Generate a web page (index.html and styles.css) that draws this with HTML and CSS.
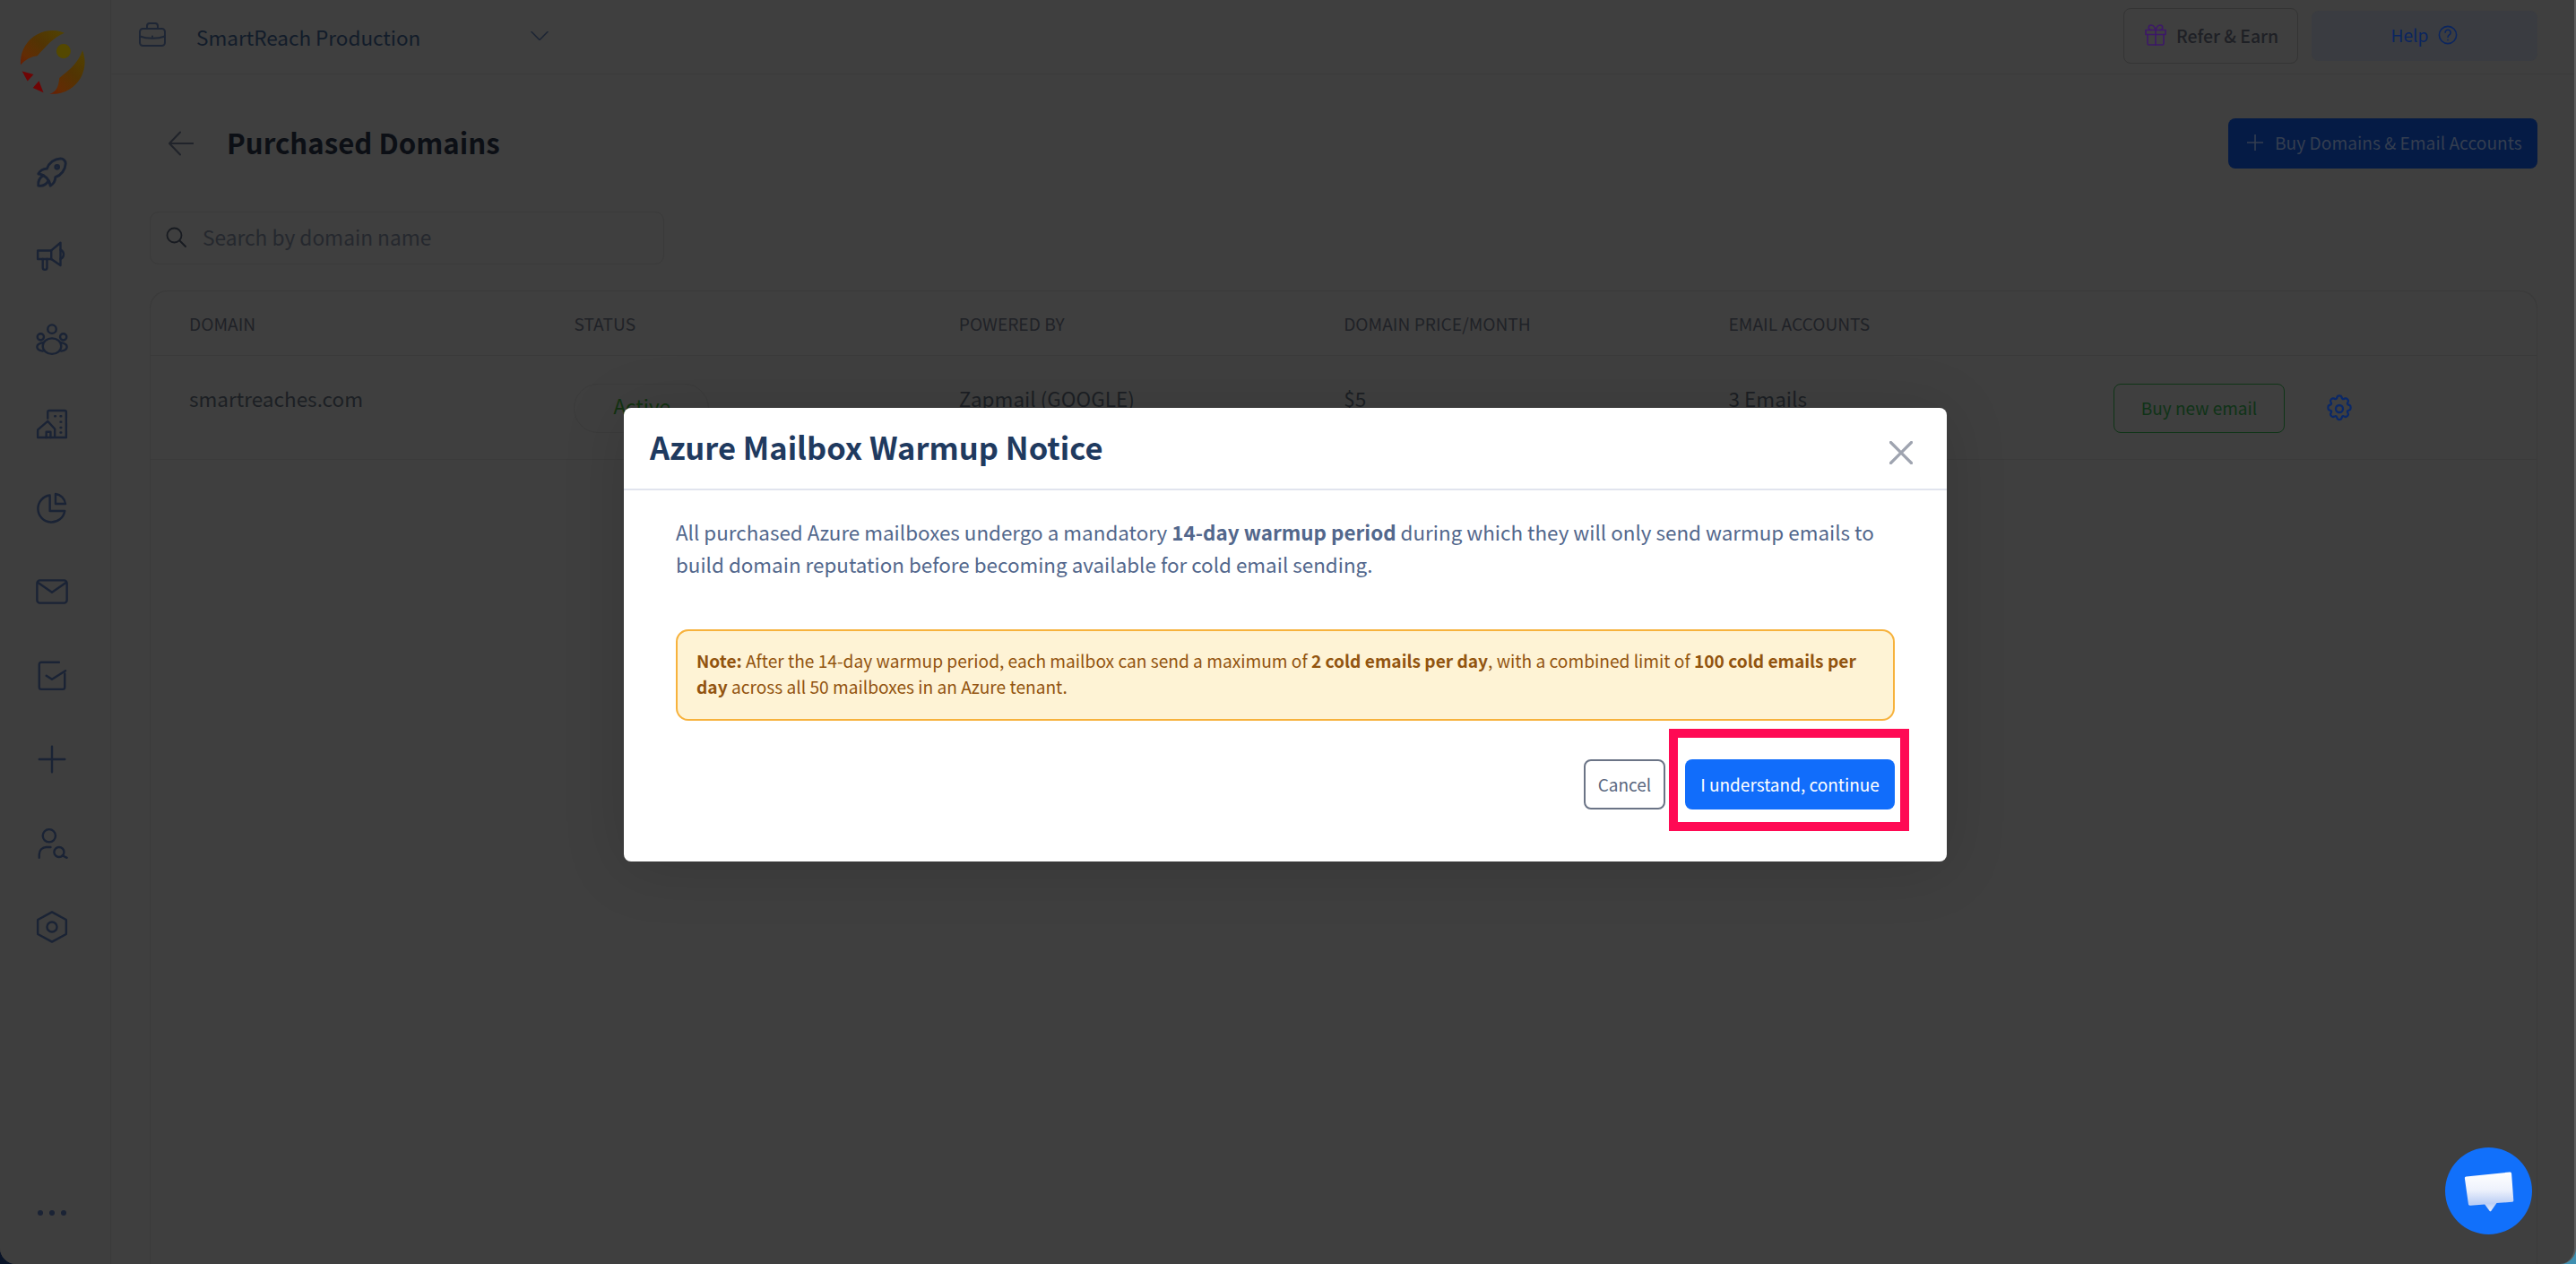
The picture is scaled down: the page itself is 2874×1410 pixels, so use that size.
FILE: index.html
```html
<!DOCTYPE html>
<html>
<head>
    <meta charset="UTF-8">
    <title>Purchased Domains</title>
    <link rel="stylesheet" href="styles.css">
</head>
<body>
    <div class="app">
        <!-- sidebar -->
        <aside class="sidebar">
            <svg class="logo" viewBox="60 95 230 230">
                <defs>
                    <linearGradient id="logoFill" gradientUnits="userSpaceOnUse" x1="90" y1="300" x2="270" y2="110">
                        <stop offset="0" stop-color="#6f0a02"/>
                        <stop offset="0.3" stop-color="#622c04"/>
                        <stop offset="0.55" stop-color="#523403"/>
                        <stop offset="1" stop-color="#514a00"/>
                    </linearGradient>
                </defs>
                <path fill="url(#logoFill)" d="M69 218A106 106 0 0 1 215 112C180 125 150 160 125 188C105 190 85 200 69 218Z"/>
                <path fill="url(#logoFill)" d="M275 170A106 106 0 0 1 165 315C190 308 195 290 198 262C235 235 265 205 275 170Z"/>
                <circle cx="212" cy="173" r="24" fill="#544800"/>
                <path fill="#6f0505" d="M74 240L112 250L92 273Z"/>
                <path fill="#6f0505" d="M130 272L145 311L110 295Z"/>
            </svg>
            <nav class="side-nav">
                <a class="side-item" href="#launch">
                    <svg class="icon icon-side" viewBox="2 2 20 20"><path d="M4 13a8 8 0 0 1 7 7a6 6 0 0 0 3-5a9 9 0 0 0 6-8a3 3 0 0 0-3-3a9 9 0 0 0-8 6a6 6 0 0 0-5 3"/><path d="M7 14a6 6 0 0 0-3 6a6 6 0 0 0 6-3"/><circle cx="15" cy="9" r="1"/></svg>
                </a>
                <a class="side-item" href="#campaigns">
                    <svg class="icon icon-side" viewBox="0 0 24 24"><path d="M2 8.500h9.500L18 3v16l-6.500-4.500H2z"/><path d="M18 8a3.500 3.500 0 0 1 0 6.500"/><path d="M5.500 14.500v6a1.500 1.500 0 0 0 3 0v-6"/><path d="M11.500 8.500v6"/></svg>
                </a>
                <a class="side-item" href="#prospects">
                    <svg class="icon icon-side" viewBox="0 0 24 24"><circle cx="12" cy="4.500" r="3"/><circle cx="4" cy="10" r="2.300"/><circle cx="20" cy="10" r="2.300"/><ellipse cx="12" cy="16.500" rx="6.500" ry="5.500"/><path d="M5.500 14c-2.500.5-4 1.500-4 3s1.500 2.500 4 3M18.500 14c2.500.5 4 1.500 4 3s-1.500 2.500-4 3"/></svg>
                </a>
                <a class="side-item" href="#accounts">
                    <svg class="icon icon-side" viewBox="0 0 24 24"><path d="M9 8V3.500a1 1 0 0 1 1-1h11a1 1 0 0 1 1 1v18H2v-5.500L9 10l5 5.500v6"/><path d="M8 21.500v-4h3v4"/><path d="M14 6.500h.5M18 6.500h.5M18 10.500h.5M18 14.500h.5M18 18h.5"/></svg>
                </a>
                <a class="side-item" href="#reports">
                    <svg class="icon icon-side" viewBox="0 0 24 24"><path d="M10.500 3.500a9.500 9.500 0 1 0 10.500 11h-10.500z"/><path d="M14.500 2.500a8 8 0 0 1 7 7h-7z"/></svg>
                </a>
                <a class="side-item" href="#inbox">
                    <svg class="icon icon-side" viewBox="0 0 24 24"><rect x="1.500" y="4" width="21" height="16" rx="2"/><path d="M2 5.500l10 7l10-7"/></svg>
                </a>
                <a class="side-item" href="#tasks">
                    <svg class="icon icon-side" viewBox="0 0 24 24"><path d="M17 3H4.500A1.500 1.500 0 0 0 3 4.500v16A1.500 1.500 0 0 0 4.500 22h15a1.500 1.500 0 0 0 1.500-1.500V11"/><path d="M8 12.500l4 2.500l9.500-6"/></svg>
                </a>
                <a class="side-item" href="#add">
                    <svg class="icon icon-side" viewBox="0 0 24 24"><path d="M12 3v18M3 12h18"/></svg>
                </a>
                <a class="side-item" href="#lookup">
                    <svg class="icon icon-side" viewBox="0 0 24 24"><circle cx="10" cy="6.500" r="4.500"/><path d="M3 22v-2.500a5 5 0 0 1 5-5h3"/><circle cx="17" cy="18" r="3.500"/><path d="M19.500 20.500l3 1.500"/></svg>
                </a>
                <a class="side-item" href="#settings">
                    <svg class="icon icon-side" viewBox="0 0 24 24"><path d="M12 1.500l10 5.500v10l-10 5.500L2 17V7z"/><circle cx="12" cy="12" r="3.500"/></svg>
                </a>
            </nav>
            <div class="side-more"><span></span><span></span><span></span></div>
        </aside>

        <div class="main">
            <!-- top bar -->
            <header class="topbar">
                <svg class="icon icon-case" viewBox="0 0 30 27"><rect x="1" y="7" width="28" height="19" rx="3.500"/><path d="M9 7V4a3 3 0 0 1 3-3h6a3 3 0 0 1 3 3v3"/><path d="M1 15.500c8 3 20 3 28 0"/><path d="M15 15.500v.5"/></svg>
                <span class="team-name">SmartReach Production</span>
                <svg class="icon icon-chevron" viewBox="0 0 20 10"><path d="M1 .5l9 9l9-9"/></svg>
                <div class="topbar-right">
                    <a class="btn-refer" href="#refer">
                        <svg class="icon icon-gift" viewBox="0 0 24 24"><rect x="1" y="6.500" width="22" height="5"/><path d="M3 11.500v10a1.500 1.500 0 0 0 1.500 1.500h15a1.500 1.500 0 0 0 1.500-1.500v-10"/><path d="M12 6.500V23"/><path d="M12 6.500c-1-3-3-5.500-5-5.500a2.700 2.700 0 0 0 0 5.500M12 6.500c1-3 3-5.500 5-5.500a2.700 2.700 0 0 1 0 5.500"/></svg>
                        <span>Refer &amp; Earn</span>
                    </a>
                    <a class="btn-help" href="#help">
                        <span>Help</span>
                        <svg class="icon icon-help" viewBox="0 0 24 24"><circle cx="12" cy="12" r="10.500"/><path d="M8.800 9a3.300 3.300 0 1 1 5 2.900c-1.200.8-1.800 1.400-1.800 2.800"/><path d="M12 18v.3"/></svg>
                    </a>
                </div>
            </header>

            <main class="content">
                <div class="page-head">
                    <svg class="icon icon-back" viewBox="0 0 28 28"><path d="M28 14H1M13 1.500L1 14l12 12.500"/></svg>
                    <h1 class="page-title">Purchased Domains</h1>
                    <a class="btn-buy" href="#buy">
                        <svg class="icon icon-plus" viewBox="0 0 18 18"><path d="M9 0v18M0 9h18"/></svg>
                        <span>Buy Domains &amp; Email Accounts</span>
                    </a>
                </div>

                <div class="search-box">
                    <svg class="icon icon-search" viewBox="0 0 23 23"><circle cx="9.500" cy="9.500" r="8"/><path d="M15.500 15.500l6.500 6.500"/></svg>
                    <span class="search-text">Search by domain name</span>
                </div>

                <div class="domain-table">
                    <div class="table-row table-head">
                        <div>DOMAIN</div>
                        <div>STATUS</div>
                        <div>POWERED BY</div>
                        <div>DOMAIN PRICE/MONTH</div>
                        <div>EMAIL ACCOUNTS</div>
                    </div>
                    <div class="table-row table-body">
                        <div>smartreaches.com</div>
                        <div><span class="status-pill">Active</span></div>
                        <div>Zapmail (GOOGLE)</div>
                        <div>$5</div>
                        <div>3 Emails</div>
                        <div class="row-actions">
                            <a class="btn-email" href="#email">Buy new email</a>
                            <svg class="icon icon-gear" viewBox="0 0 24 24"><path d="M10.300 1.800c.4-1.100 3-1.100 3.400 0l.5 1.400c.2.500.8.800 1.300.6l1.400-.5c1.100-.4 2.900 1.400 2.500 2.500l-.6 1.400c-.2.500 0 1.100.5 1.300l1.400.6c1 .5 1 3.300 0 3.800l-1.400.6c-.5.200-.7.800-.5 1.300l.6 1.400c.4 1.100-1.400 2.900-2.500 2.500l-1.400-.5c-.5-.2-1.100.1-1.300.6l-.5 1.400c-.4 1.100-3 1.100-3.400 0l-.5-1.400c-.2-.5-.8-.8-1.300-.6l-1.400.5c-1.100.4-2.900-1.400-2.500-2.500l.6-1.400c.2-.5 0-1.100-.5-1.300l-1.400-.6c-1-.5-1-3.300 0-3.800l1.400-.6c.5-.2.7-.8.5-1.300l-.6-1.400c-.4-1.100 1.400-2.900 2.500-2.500l1.400.5c.5.200 1.100-.1 1.300-.6z"/><circle cx="12" cy="12" r="3"/></svg>
                        </div>
                    </div>
                </div>
            </main>
        </div>

        <!-- modal -->
        <div class="modal-layer">
            <div class="modal">
                <div class="modal-header">
                    <h2 class="modal-title">Azure Mailbox Warmup Notice</h2>
                    <svg class="icon icon-close" viewBox="0 0 26 26"><path d="M1.500 1.500l23 23M24.500 1.500l-23 23"/></svg>
                </div>
                <div class="modal-body">
                    <p class="modal-text">All purchased Azure mailboxes undergo a mandatory <strong>14-day warmup period</strong> during which they will only send warmup emails to build domain reputation before becoming available for cold email sending.</p>
                    <div class="note">
                        <strong>Note:</strong> After the 14-day warmup period, each mailbox can send a maximum of <strong>2 cold emails per day</strong>, with a combined limit of <strong>100 cold emails per day</strong> across all 50 mailboxes in an Azure tenant.
                    </div>
                    <div class="modal-actions">
                        <button class="btn-cancel">Cancel</button>
                        <button class="btn-continue">I understand, continue<span class="highlight"></span></button>
                    </div>
                </div>
            </div>
        </div>

        <!-- chat -->
        <div class="chat-bubble">
            <svg class="chat-icon" viewBox="0 0 56 46">
                <defs>
                    <linearGradient id="chatFill" x1="0" y1="0" x2="0" y2="1">
                        <stop offset="0" stop-color="#ffffff"/>
                        <stop offset="0.45" stop-color="#eef2fc"/>
                        <stop offset="0.8" stop-color="#bccff5"/>
                        <stop offset="1" stop-color="#e4ebfb"/>
                    </linearGradient>
                </defs>
                <path fill="url(#chatFill)" d="M2.500 6.500L51 1.500c1.200-.1 2 .6 2.100 1.700l2.200 29.500c.1 1.200-.6 2-1.800 2.100l-17 1.300l-6.300 8.800c-.5.600-1 .6-1.500 0l-5.500-7.400L7 38.700c-1.200.1-2-.6-2.100-1.700L.9 8.500c-.1-1.100.5-1.900 1.600-2z"/>
            </svg>
        </div>
    </div>
</body>
</html>
```

FILE: styles.css
```css
/* dimmed page behind the modal */
* {
    box-sizing: border-box;
}

html, body {
    height: 100%;
}

body {
    margin: 0;
    overflow: hidden;
    background: linear-gradient(90deg, #0a1428, #3f8fb0);
    font-family: "Noto Sans CJK SC", "Noto Sans", sans-serif;
    color: #1d2026;
}

a {
    text-decoration: none;
}

.app {
    position: relative;
    display: flex;
    height: 1410px;
    border-right: 2px solid #5e5e5e;
    border-radius: 0 0 18px 18px;
    overflow: hidden;
    background: #3f3f3f;
}

.icon {
    display: block;
    flex: none;
    fill: none;
    stroke: currentColor;
    stroke-linecap: round;
    stroke-linejoin: round;
}

/* sidebar */
.sidebar {
    width: 124px;
    flex: none;
    display: flex;
    flex-direction: column;
    align-items: center;
    border-right: 1px solid #3a3a3a;
    background: #3e3e3e;
}

.logo {
    width: 77px;
    height: 77px;
    margin-top: 31px;
    margin-bottom: 37px;
    margin-right: 6px;
}

.side-nav {
    display: flex;
    flex-direction: column;
    width: 100%;
}

.side-item {
    display: flex;
    height: 93.6px;
    align-items: center;
    justify-content: center;
    padding-right: 8px;
    color: #1a2335;
}

.icon-side {
    width: 38px;
    height: 38px;
    stroke-width: 1.5;
}

.side-more {
    display: flex;
    gap: 7px;
    margin-top: auto;
    margin-bottom: 54px;
    margin-right: 8px;
}

.side-more span {
    width: 6px;
    height: 6px;
    border-radius: 50%;
    background: #1a2335;
}

/* top bar */
.main {
    flex: 1;
    min-width: 0;
    display: flex;
    flex-direction: column;
}

.topbar {
    height: 83px;
    flex: none;
    display: flex;
    align-items: center;
    padding: 0 41px 0 31px;
    border-bottom: 1px solid #3a3a3a;
}

.icon-case {
    width: 30px;
    height: 27px;
    stroke-width: 2;
    color: #1e2635;
    margin-bottom: 6px;
}

.team-name {
    margin-left: 34px;
    font-size: 22.5px;
    line-height: 30px;
    color: #121c2a;
}

.icon-chevron {
    width: 20px;
    height: 10px;
    stroke-width: 1.6;
    margin-left: 123px;
    margin-bottom: 2px;
    color: #1e2635;
}

.topbar-right {
    margin-left: auto;
    display: flex;
    align-items: center;
    gap: 15px;
    margin-bottom: 2px;
}

.btn-refer {
    width: 195px;
    height: 62px;
    display: flex;
    align-items: center;
    gap: 11px;
    padding: 0 0 2px 23px;
    border: 1px solid #343434;
    border-radius: 8px;
    font-size: 19.4px;
    font-weight: 500;
    color: #1e2025;
}

.icon-gift {
    width: 24px;
    height: 24px;
    stroke-width: 1.6;
    color: #3d1868;
}

.btn-help {
    width: 252px;
    height: 56px;
    display: flex;
    align-items: center;
    justify-content: center;
    gap: 11px;
    padding-bottom: 2px;
    border-radius: 8px;
    background: #3a3c41;
    font-size: 19.2px;
    color: #0a2560;
}

.icon-help {
    width: 22px;
    height: 22px;
    stroke-width: 1.7;
}

/* page content */
.content {
    flex: 1;
    min-height: 0;
    display: flex;
    flex-direction: column;
    padding: 49px 41px 0 43px;
}

.page-head {
    height: 56px;
    display: flex;
    align-items: center;
}

.icon-back {
    width: 28px;
    height: 28px;
    margin-left: 21px;
    stroke-width: 2;
    color: #20232a;
}

.page-title {
    margin: 0 0 3px 37px;
    font-size: 31.2px;
    line-height: 44px;
    font-weight: 700;
    color: #0c0f15;
}

.btn-buy {
    margin-left: auto;
    width: 345px;
    height: 56px;
    display: flex;
    align-items: center;
    gap: 13px;
    padding: 0 0 2px 21px;
    border-radius: 8px;
    background: #051b45;
    font-size: 19.2px;
    color: #343e50;
}

.icon-plus {
    width: 18px;
    height: 18px;
    stroke-width: 1.6;
}

.search-box {
    width: 574px;
    height: 59px;
    margin-top: 48px;
    display: flex;
    align-items: center;
    gap: 18px;
    padding: 0 0 2px 17px;
    border: 1px solid #3a3a3a;
    border-radius: 10px;
}

.icon-search {
    width: 23px;
    height: 23px;
    stroke-width: 1.8;
    color: #181b21;
}

.search-text {
    font-size: 22.7px;
    line-height: 30px;
    color: #25282e;
}

/* domain table */
.domain-table {
    flex: 1;
    margin-top: 29px;
    border: 1px solid #3a3a3a;
    border-bottom: 0;
    border-radius: 20px 20px 0 0;
}

.table-row {
    display: grid;
    grid-template-columns: repeat(5, 429.4px) 1fr;
    padding-left: 43px;
}

.table-head {
    height: 72px;
    align-items: center;
    border-bottom: 1px solid #3a3a3a;
    font-size: 19.2px;
    line-height: 28px;
    color: #1f2227;
}

.table-body {
    height: 116px;
    padding-top: 29px;
    border-bottom: 1px solid #3b3b3b;
    font-size: 22.5px;
    line-height: 36px;
    color: #1c1f24;
}

.status-pill {
    display: block;
    width: 151px;
    height: 55px;
    margin-top: 2px;
    padding: 5px 0 0 43px;
    border: 1px solid #3b3b3b;
    border-radius: 28px;
    font-size: 22.5px;
    color: #123210;
}

.row-actions {
    display: flex;
    align-items: center;
    height: 55px;
    margin-top: 2px;
}

.btn-email {
    width: 191px;
    height: 55px;
    display: flex;
    align-items: center;
    justify-content: center;
    padding-bottom: 2px;
    border: 1px solid #0f3517;
    border-radius: 8px;
    font-size: 19px;
    color: #0f3317;
}

.icon-gear {
    width: 32px;
    height: 32px;
    margin-left: 45px;
    stroke-width: 1.7;
    color: #0a2868;
}

/* modal */
.modal-layer {
    position: absolute;
    inset: 0;
    display: flex;
    justify-content: center;
    align-items: flex-start;
    padding: 455px 4px 0 0;
}

.modal {
    width: 1476px;
    height: 506px;
    border-radius: 8px;
    background: #fff;
    box-shadow: 0 6px 70px rgba(0, 0, 0, 0.14);
}

.modal-header {
    height: 92px;
    display: flex;
    align-items: center;
    justify-content: space-between;
    padding: 0 38px 0 29px;
    border-bottom: 2px solid #e1e4ee;
}

.modal-title {
    margin: 0 0 4px;
    font-size: 34.5px;
    line-height: 46px;
    font-weight: 700;
    color: #1f3a5f;
}

.icon-close {
    width: 26px;
    height: 26px;
    margin-top: 9px;
    stroke-width: 3.2;
    color: #9fa4b0;
}

.modal-body {
    padding: 28px 58px 0;
}

.modal-text {
    margin: 0;
    font-size: 22.42px;
    line-height: 36px;
    color: #52678c;
}

.modal-text strong {
    font-weight: 700;
}

.note {
    height: 102px;
    margin-top: 55px;
    padding: 19px 21px 0;
    border: 2px solid #f7b23c;
    border-radius: 14px;
    background: #fef3d5;
    font-size: 19.15px;
    line-height: 29px;
    color: #92540f;
}

.modal-actions {
    display: flex;
    justify-content: flex-end;
    gap: 22px;
    margin-top: 43px;
}

.btn-cancel,
.btn-continue {
    height: 56px;
    padding: 0 0 2px;
    border-radius: 8px;
    font-family: inherit;
    font-size: 19px;
}

.btn-cancel {
    width: 91px;
    border: 2px solid #6b7486;
    background: #fff;
    color: #5a6880;
}

.btn-continue {
    position: relative;
    width: 234px;
    border: 0;
    background: #116dfb;
    color: #fff;
    font-weight: 400;
}

/* red annotation around the primary button */
.highlight {
    position: absolute;
    top: -34px;
    left: -18px;
    right: -16px;
    bottom: -24px;
    border: 10px solid #ff0a54;
}

/* chat launcher */
.chat-bubble {
    position: absolute;
    right: 47px;
    bottom: 33px;
    width: 97px;
    height: 97px;
    display: flex;
    align-items: center;
    justify-content: center;
    border-radius: 50%;
    background: #1170fb;
}

.chat-icon {
    display: block;
    width: 56px;
    height: 46px;
}
```
